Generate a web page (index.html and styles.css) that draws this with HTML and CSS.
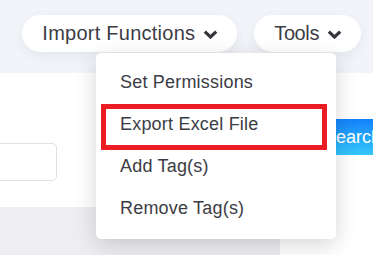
FILE: index.html
```html
<!DOCTYPE html>
<html lang="en">
<head>
<meta charset="utf-8">
<title>Functions menu</title>
<link rel="stylesheet" href="styles.css">
</head>
<body>
<div class="page">
  <header class="topbar">
    <button class="pill">Import Functions
      <svg class="chev" width="15" height="9" viewBox="0 0 15 9"><polyline points="1.8,1.6 7.5,7 13.2,1.6" fill="none" stroke="#35353d" stroke-width="3.2"/></svg>
    </button>
    <button class="pill pill-compact">Tools
      <svg class="chev" width="15" height="9" viewBox="0 0 15 9"><polyline points="1.8,1.6 7.5,7 13.2,1.6" fill="none" stroke="#35353d" stroke-width="3.2"/></svg>
    </button>
  </header>
  <main class="content">
    <div class="search-row">
      <input class="search-input" type="text">
      <button class="search-btn">Search</button>
    </div>
  </main>
  <div class="lower">
    <div class="lower-panel"></div>
  </div>
  <ul class="menu">
    <li class="menu-item">Set Permissions</li>
    <li class="menu-item highlight">Export Excel File</li>
    <li class="menu-item">Add Tag(s)</li>
    <li class="menu-item">Remove Tag(s)</li>
  </ul>
</div>
</body>
</html>
```

FILE: styles.css
```css
*, *::before, *::after { box-sizing: border-box; }
html, body { margin: 0; padding: 0; }
body {
  width: 373px;
  height: 255px;
  overflow: hidden;
  font-family: "Liberation Sans", Arial, sans-serif;
  color: #3c3c45;
  background: #fff;
}
.page {
  position: relative;
  width: 373px;
  height: 255px;
  overflow: hidden;
}
.topbar {
  height: 73px;
  background: #f2f4f9;
  display: flex;
  justify-content: flex-end;
  align-items: flex-start;
  gap: 17px;
  padding: 15px 12px 0 0;
}
.pill {
  height: 37px;
  border: none;
  border-radius: 19px;
  background: #fff;
  display: flex;
  align-items: center;
  gap: 8px;
  padding: 0 19px 0 20px;
  font-family: inherit;
  font-size: 20px;
  letter-spacing: 0.25px;
  color: #3c3c45;
  box-shadow: 0 4px 12px rgba(40, 50, 80, 0.07);
}
.pill-compact { letter-spacing: -0.4px; }
.chev { display: block; margin-top: 1px; }
.content {
  height: 134px;
  background: #fff;
}
.search-row {
  display: flex;
  align-items: flex-start;
  padding-top: 46px;
}
.search-input {
  width: 80px;
  height: 38px;
  margin: 24px 0 0 -23px;
  border: 1px solid #e1e1e4;
  border-radius: 5px;
  background: #fff;
}
.search-btn {
  flex-shrink: 0;
  margin-left: auto;
  margin-right: -12px;
  width: 73px;
  height: 36px;
  border: none;
  padding: 0 0 0 12px;
  text-align: left;
  font-family: inherit;
  font-size: 18px;
  color: #fff;
  background: linear-gradient(180deg, #1482fb, #33c7fb);
}
.lower {
  display: flex;
  height: 48px;
}
.lower-panel {
  width: 280px;
  background: #eeeef1;
}
.menu {
  position: absolute;
  left: 96px;
  top: 53px;
  width: 240px;
  margin: 0;
  padding: 8px 0 10px;
  list-style: none;
  background: #fff;
  border-radius: 5px;
  box-shadow: 0 6px 22px rgba(0, 0, 0, 0.16);
}
.menu-item {
  position: relative;
  height: 42px;
  line-height: 42px;
  padding-left: 24px;
  font-size: 18px;
  letter-spacing: 0.2px;
  color: #3c3c45;
}
.highlight::after {
  content: "";
  position: absolute;
  left: 5px;
  top: 1px;
  width: 226px;
  height: 46px;
  border: 5px solid #ec1c24;
}
```
